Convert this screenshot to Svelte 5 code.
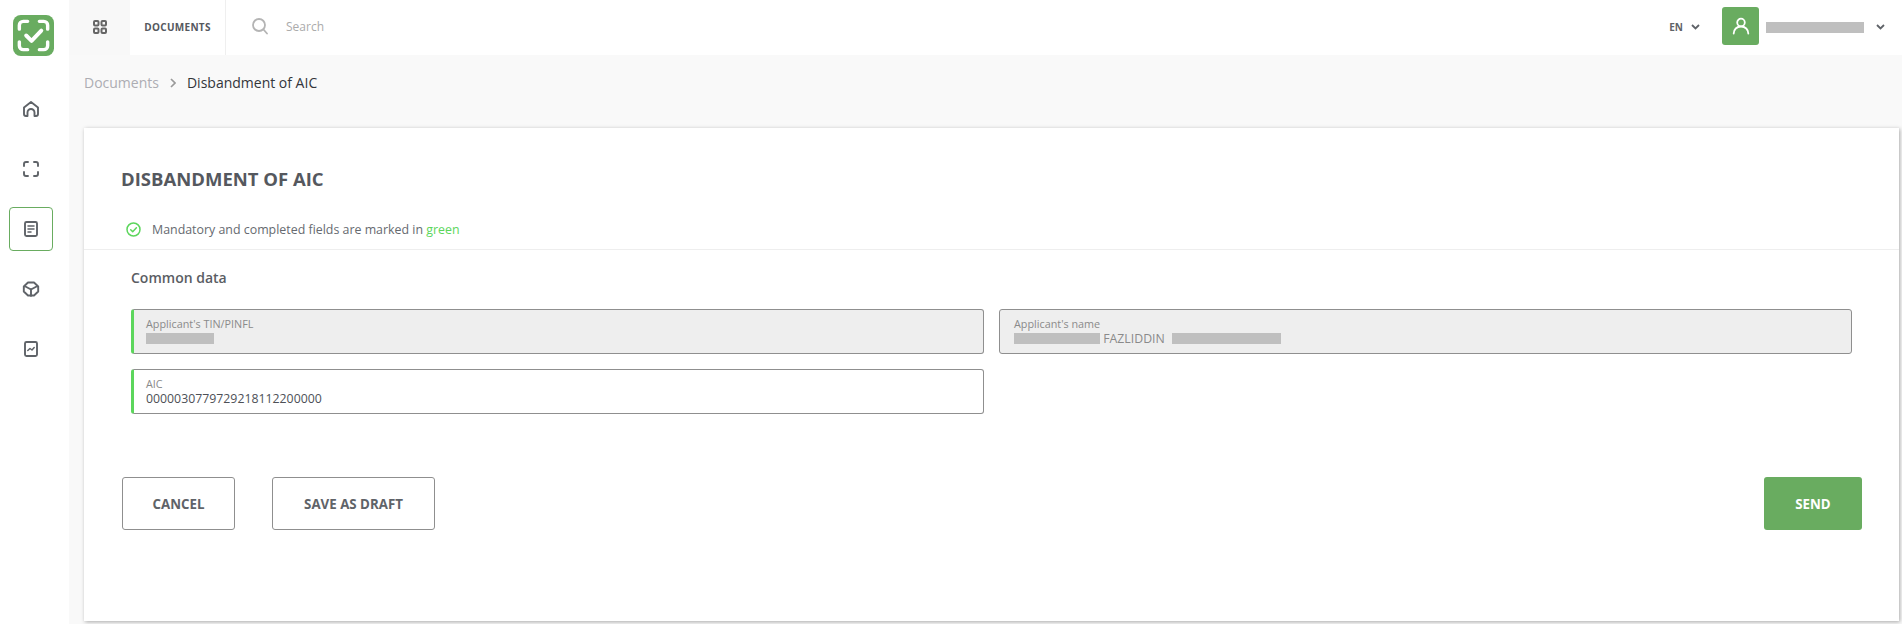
<script>
  const navItems = [
    { id: 'home', active: false },
    { id: 'scan', active: false },
    { id: 'docs', active: true },
    { id: 'box', active: false },
    { id: 'chart', active: false }
  ];
</script>

<div class="layout">
  <aside class="sidebar">
    <div class="logo">
      <svg width="41" height="41" viewBox="0 0 42 42" fill="none">
        <rect width="42" height="42" rx="8" fill="#69ac60" />
        <path d="M6.500 14.500V10.500a4 4 0 0 1 4-4h4.500M27 6.500h4.500a4 4 0 0 1 4 4v4M35.500 27.500v4a4 4 0 0 1-4 4H27M15 35.500h-4.500a4 4 0 0 1-4-4v-4" stroke="#fff" stroke-width="3.500" stroke-linecap="round" />
        <path d="M13.500 21l5.500 5.500L29 16" stroke="#fff" stroke-width="4" stroke-linecap="round" stroke-linejoin="round" />
      </svg>
    </div>
    <nav class="nav">
      {#each navItems as item}
        <div class="nav-item" class:active={item.active}>
          <svg width="18" height="18" viewBox="0 0 18 18" fill="none" stroke="#5f6368" stroke-width="1.900" stroke-linecap="round" stroke-linejoin="round">
            {#if item.id === 'home'}
              <path d="M5.500 16H4a2 2 0 0 1-2-2V7.500L9 2l7 5.500V14a2 2 0 0 1-2 2h-1.500v-3.500a3.500 3.500 0 0 0-7 0z" />
            {:else if item.id === 'scan'}
              <path d="M2 6V4a2 2 0 0 1 2-2h2M12 2h2a2 2 0 0 1 2 2v2M16 12v2a2 2 0 0 1-2 2h-2M6 16H4a2 2 0 0 1-2-2v-2" />
            {:else if item.id === 'docs'}
              <rect x="3" y="2" width="12" height="14" rx="1.500" />
              <path d="M6 6h6M6 9h6M6 12h3" stroke-width="1.500" />
            {:else if item.id === 'box'}
              <path d="M6 2.500h6L16.200 6.500v5L12 15.500H6L1.800 11.500v-5zM2.500 6L9 9.500 15.500 6M9 9.500V16" />
            {:else}
              <rect x="3" y="2" width="12" height="14" rx="1.500" />
              <path d="M5.800 10.500L8 8.500l2 1.500 2.200-2.500" stroke-width="1.500" />
            {/if}
          </svg>
        </div>
      {/each}
    </nav>
  </aside>

  <div class="main">
    <header class="topbar">
      <div class="tab-grid">
        <svg width="14" height="14" viewBox="0 0 14 14" fill="none" stroke="#666" stroke-width="2">
          <rect x="1" y="1" width="4.500" height="4.500" rx="1" />
          <rect x="8.500" y="1" width="4.500" height="4.500" rx="1" />
          <rect x="1" y="8.500" width="4.500" height="4.500" rx="1" />
          <rect x="8.500" y="8.500" width="4.500" height="4.500" rx="1" />
        </svg>
      </div>
      <div class="tab-docs">DOCUMENTS</div>
      <div class="search">
        <svg width="16" height="17" viewBox="0 0 16 17" fill="none" stroke="#b4b4b4" stroke-width="1.800" stroke-linecap="round">
          <circle cx="7" cy="7" r="6" />
          <path d="M11.500 11.500L15 15.500" />
        </svg>
        <span>Search</span>
      </div>
      <div class="lang">
        EN
        <svg width="9" height="6" viewBox="0 0 9 6" fill="none" stroke="#5f6368" stroke-width="1.800"><path d="M1 1l3.500 3.500L8 1" /></svg>
      </div>
      <div class="avatar">
        <svg width="18" height="18" viewBox="0 0 18 18" fill="none" stroke="#fff" stroke-width="1.800" stroke-linecap="round">
          <circle cx="9" cy="5.500" r="3.800" />
          <path d="M1.700 16.500c0-4 3-7 7.300-7s7.300 3 7.300 7" />
        </svg>
      </div>
      <div class="redact user-name"></div>
      <svg class="user-chev" width="9" height="6" viewBox="0 0 9 6" fill="none" stroke="#5f6368" stroke-width="1.800"><path d="M1 1l3.500 3.500L8 1" /></svg>
    </header>

    <div class="crumbs">
      <span class="crumb-link">Documents</span>
      <svg width="6" height="10" viewBox="0 0 6 10" fill="none" stroke="#9a9a9a" stroke-width="1.700"><path d="M1 1l4 4-4 4" /></svg>
      <span class="crumb-current">Disbandment of AIC</span>
    </div>

    <section class="card">
      <h1>DISBANDMENT OF AIC</h1>
      <div class="notice">
        <svg width="15" height="15" viewBox="0 0 15 15" fill="none" stroke="#5cd65c" stroke-width="1.500" stroke-linecap="round" stroke-linejoin="round">
          <circle cx="7.500" cy="7.500" r="6.500" />
          <path d="M4.700 7.700l2 2 3.700-3.900" />
        </svg>
        <span>Mandatory and completed fields are marked in <em>green</em></span>
      </div>
      <div class="form">
        <h2>Common data</h2>
        <div class="fields">
          <div class="field disabled marked">
            <label for="tin">Applicant's TIN/PINFL</label>
            <div id="tin" class="value"><span class="redact tin"></span></div>
          </div>
          <div class="field disabled">
            <label for="name">Applicant's name</label>
            <div id="name" class="value"><span class="redact first"></span> FAZLIDDIN <span class="redact last"></span></div>
          </div>
          <div class="field marked">
            <label for="aic">AIC</label>
            <div id="aic" class="value dark">0000030779729218112200000</div>
          </div>
        </div>
      </div>
      <div class="actions">
        <button class="outline cancel">CANCEL</button>
        <button class="outline draft">SAVE AS DRAFT</button>
        <button class="send">SEND</button>
      </div>
    </section>
  </div>
</div>

<style>
  :global(body) {
    margin: 0;
    background: #fff;
    font-family: "Open Sans", "Liberation Sans", sans-serif;
  }
  .layout {
    display: flex;
    height: 624px;
    overflow: hidden;
  }
  .sidebar {
    width: 69px;
    flex: none;
    box-sizing: border-box;
    padding-left: 9px;
    background: #fff;
    display: flex;
    flex-direction: column;
    align-items: flex-start;
  }
  .logo {
    height: 41px;
    margin: 15px 0 0 4px;
  }
  .nav {
    margin-top: 31px;
    display: flex;
    flex-direction: column;
    gap: 16px;
  }
  .nav-item {
    width: 44px;
    height: 44px;
    box-sizing: border-box;
    display: flex;
    align-items: center;
    justify-content: center;
    border-radius: 4px;
    border: 1px solid transparent;
  }
  .nav-item.active {
    border-color: #69ac60;
  }
  .main {
    flex: 1;
    min-width: 0;
    background: #f9f9f9;
    display: flex;
    flex-direction: column;
  }
  .topbar {
    height: 55px;
    flex: none;
    background: #fff;
    display: flex;
    align-items: center;
  }
  .tab-grid {
    width: 61px;
    height: 55px;
    box-sizing: border-box;
    padding-bottom: 2px;
    background: #f8f8f8;
    display: flex;
    align-items: center;
    justify-content: center;
  }
  .tab-docs {
    width: 96px;
    height: 55px;
    box-sizing: border-box;
    padding-bottom: 2px;
    border-right: 1px solid #efefef;
    display: flex;
    align-items: center;
    justify-content: center;
    font-size: 10px;
    font-weight: 700;
    letter-spacing: 0.3px;
    color: #55585e;
  }
  .search {
    flex: 1;
    display: flex;
    align-items: center;
    padding: 0 0 2px 26px;
    gap: 18px;
    font-size: 12px;
    color: #ababab;
  }
  .lang {
    display: flex;
    align-items: center;
    gap: 8px;
    padding-bottom: 2px;
    font-size: 10px;
    font-weight: 700;
    color: #5f6368;
    margin-right: 22px;
  }
  .avatar {
    width: 37px;
    height: 38px;
    margin-bottom: 3px;
    background: #69ac60;
    border-radius: 3px;
    display: flex;
    align-items: center;
    justify-content: center;
    margin-right: 7px;
  }
  .user-name {
    width: 98px;
    height: 11px;
  }
  .user-chev {
    margin: 0 17px 2px 12px;
  }
  .redact {
    background: #bfbfbf;
  }
  .crumbs {
    height: 73px;
    flex: none;
    box-sizing: border-box;
    padding: 0 0 18px 15px;
    display: flex;
    align-items: center;
    gap: 11px;
    font-size: 14px;
  }
  .crumb-link {
    color: #adadb3;
  }
  .crumb-current {
    color: #33363b;
  }
  .card {
    margin-left: 15px;
    width: 1815px;
    height: 493px;
    flex: none;
    background: #fff;
    box-shadow: 1px 1px 4px rgba(0, 0, 0, 0.32);
    box-sizing: border-box;
    padding-top: 39px;
  }
  h1 {
    margin: 0 0 0 37px;
    font-size: 18.500px;
    line-height: 24px;
    font-weight: 700;
    color: #55585e;
  }
  .notice {
    margin: 27px 0 0 42px;
    height: 22px;
    display: flex;
    align-items: center;
    gap: 11px;
    font-size: 12.400px;
    color: #666a70;
  }
  .notice em {
    font-style: normal;
    color: #5cd65c;
  }
  .form {
    margin-top: 9px;
    border-top: 1px solid #eee;
    padding: 18px 46px 0 47px;
  }
  h2 {
    margin: 0;
    font-size: 14px;
    line-height: 20px;
    font-weight: 600;
    color: #5a5d63;
  }
  .fields {
    margin-top: 21px;
    display: grid;
    grid-template-columns: 853px 853px;
    column-gap: 15px;
    row-gap: 15px;
  }
  .field {
    height: 45px;
    box-sizing: border-box;
    border: 1px solid #8f8f8f;
    border-radius: 3px;
    padding: 7px 0 0 14px;
    background: #fff;
  }
  .field.marked {
    border-left: 3px solid #5cd65c;
    padding-left: 12px;
  }
  .field.disabled {
    background: #eeeeee;
  }
  label {
    display: block;
    font-size: 10.800px;
    line-height: 14px;
    color: #8a8a8a;
  }
  .value {
    font-size: 12.300px;
    line-height: 15px;
    color: #8a8a8a;
    white-space: nowrap;
  }
  .value.dark {
    color: #4d5056;
  }
  .value .redact {
    display: inline-block;
    height: 11px;
    vertical-align: -1px;
  }
  .redact.tin {
    width: 68px;
  }
  .redact.first {
    width: 86px;
  }
  .redact.last {
    width: 109px;
    margin-left: 4px;
  }
  .actions {
    margin-top: 63px;
    padding: 0 37px 0 38px;
    display: flex;
    gap: 37px;
  }
  button {
    height: 53px;
    font-family: inherit;
    font-size: 13.300px;
    font-weight: 700;
    border-radius: 3px;
    cursor: pointer;
  }
  .outline {
    background: #fff;
    border: 1px solid #8f8f8f;
    color: #5f6368;
  }
  .cancel {
    width: 113px;
  }
  .draft {
    width: 163px;
  }
  .send {
    width: 98px;
    margin-left: auto;
    background: #69ac60;
    border: none;
    color: #fff;
  }
</style>
